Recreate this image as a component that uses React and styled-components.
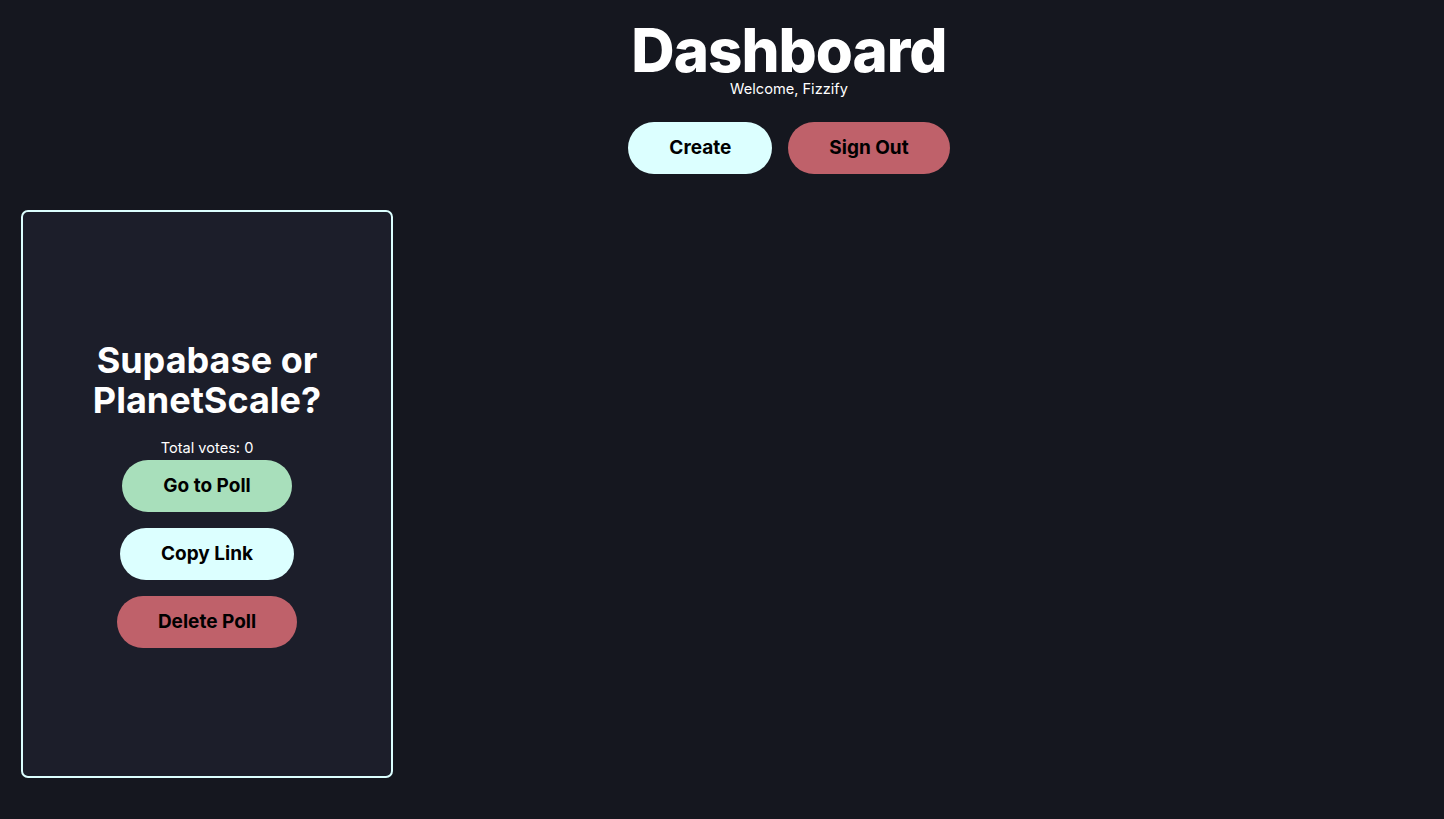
import React from "react";
import styled, { createGlobalStyle } from "styled-components";

const Global = createGlobalStyle`
  html, body { margin: 0; padding: 0; background: #15171f; }
  body { font-family: Inter, "Noto Sans", sans-serif; color: #ffffff; min-height: 819px; }
`;

const Page = styled.main`
  display: flex;
  flex-direction: column;
  padding: 20px 21px 40px;
`;

const Header = styled.header`
  display: flex;
  flex-direction: column;
  align-items: center;
  margin-left: 134px;
`;

const Title = styled.h1`
  margin: 0;
  font-size: 60px;
  line-height: 60px;
  font-weight: 800;
  letter-spacing: -1px;
`;

const Welcome = styled.p`
  margin: 0;
  font-size: 14.6px;
  line-height: 18px;
`;

const Actions = styled.div`
  display: flex;
  flex-direction: ${(p) => (p.$column ? "column" : "row")};
  align-items: center;
  gap: 16px;
  margin-top: ${(p) => p.$mt || 0}px;
`;

const Pill = styled.button`
  border: none;
  border-radius: 9999px;
  background: ${(p) => p.$bg};
  color: #000;
  font-family: Inter, "Noto Sans", sans-serif;
  font-size: 19px;
  line-height: 28px;
  font-weight: 700;
  padding: 12px 41px;
  cursor: pointer;
`;

const Grid = styled.section`
  display: grid;
  grid-template-columns: repeat(auto-fill, 372px);
  margin-top: 36px;
`;

const Card = styled.article`
  box-sizing: border-box;
  height: 568px;
  border: 2px solid #dcffff;
  border-radius: 7px;
  background: #1c1e2a;
  display: flex;
  flex-direction: column;
  align-items: center;
  justify-content: center;
  padding: 0 20px;
`;

const CardTitle = styled.h2`
  margin: 0;
  font-size: 36px;
  line-height: 40px;
  font-weight: 700;
  text-align: center;
`;

const Votes = styled.p`
  margin: 18px 0 0;
  font-size: 14.6px;
  line-height: 20px;
`;

const C = {
  cyan: "#dcffff",
  red: "#bf616a",
  green: "#a8dfbb",
};

export default function App() {
  return (
    <>
      <Global />
      <Page>
        <Header>
          <Title>Dashboard</Title>
          <Welcome>Welcome, Fizzify</Welcome>
          <Actions $mt={24}>
            <Pill $bg={C.cyan}>Create</Pill>
            <Pill $bg={C.red}>Sign Out</Pill>
          </Actions>
        </Header>
        <Grid>
          <Card>
            <CardTitle>
              Supabase or
              <br />
              PlanetScale?
            </CardTitle>
            <Votes>Total votes: 0</Votes>
            <Actions $column $mt={2}>
              <Pill $bg={C.green}>Go to Poll</Pill>
              <Pill $bg={C.cyan}>Copy Link</Pill>
              <Pill $bg={C.red}>Delete Poll</Pill>
            </Actions>
          </Card>
        </Grid>
      </Page>
    </>
  );
}
